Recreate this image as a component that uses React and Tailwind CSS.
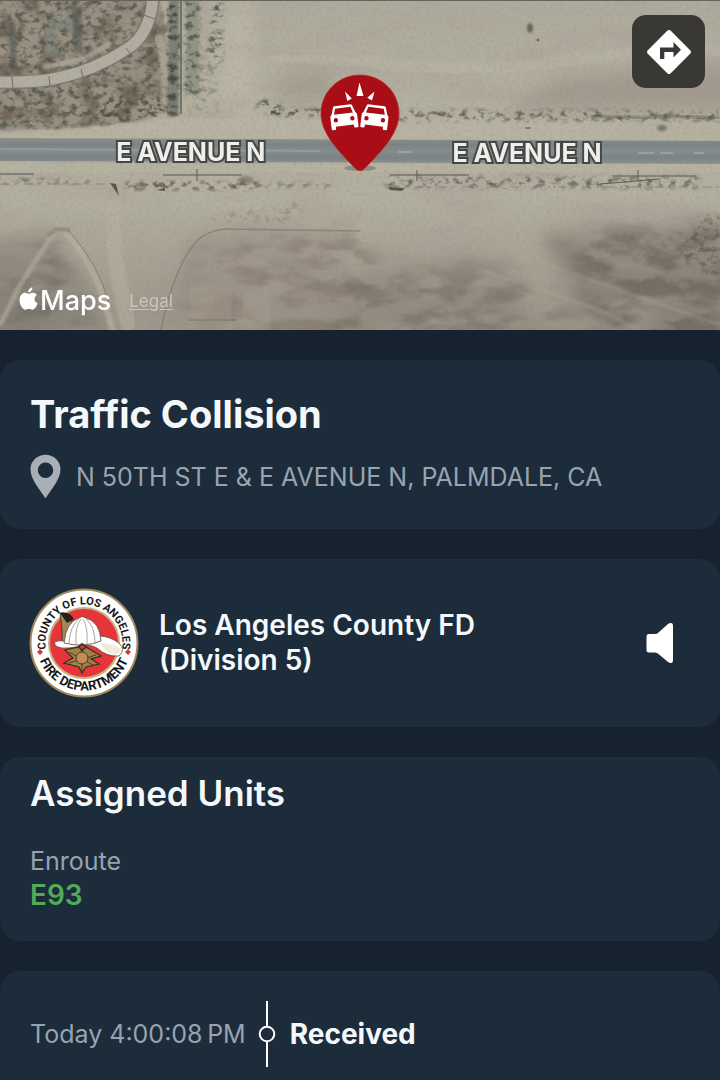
const CAR = (
  <g>
    <path
      fillRule="evenodd"
      d="M4 0.8 Q4.400 0 5.400 0 H21.600 Q22.600 0 23 0.800 L25.400 8 Q27 9.200 27 11 V22.500 Q27 23.500 26 23.500 H23.600 Q22.600 23.500 22.600 22.500 V20.500 H4.400 V22.500 Q4.400 23.500 3.400 23.500 H1 Q0 23.500 0 22.500 V11 Q0 9.200 1.600 8 Z M5.800 2.400 L4 8.400 H23 L21.200 2.400 Z"
      fill="#fff"
    />
    <circle cx="5.200" cy="14" r="2.200" fill="#a90d15" />
    <circle cx="21.800" cy="14" r="2.200" fill="#a90d15" />
  </g>
);

function SatelliteTerrain() {
  return (
    <svg
      className="absolute inset-0 h-full w-full"
      viewBox="0 0 720 330"
      preserveAspectRatio="xMidYMid slice"
      aria-hidden="true"
    >
      <defs>
        <linearGradient id="soil" x1="0" y1="0" x2="0" y2="1">
          <stop offset="0" stopColor="#aeab9d" />
          <stop offset="0.350" stopColor="#b4b1a0" />
          <stop offset="0.600" stopColor="#b3b0a0" />
          <stop offset="0.800" stopColor="#a7a294" />
          <stop offset="1" stopColor="#9a9488" />
        </linearGradient>
        <linearGradient id="asphalt" x1="0" y1="0" x2="0" y2="1">
          <stop offset="0" stopColor="#8d918c" />
          <stop offset="0.250" stopColor="#7b8385" />
          <stop offset="0.500" stopColor="#868d8d" />
          <stop offset="0.750" stopColor="#7a8386" />
          <stop offset="1" stopColor="#8d918a" />
        </linearGradient>
        <filter id="soft" x="-20%" y="-20%" width="140%" height="140%">
          <feGaussianBlur stdDeviation="9" />
        </filter>
        <filter id="edge" x="-20%" y="-20%" width="140%" height="140%">
          <feGaussianBlur stdDeviation="1" />
        </filter>
        <filter id="patches" x="0" y="0" width="100%" height="100%">
          <feTurbulence type="fractalNoise" baseFrequency="0.012 0.035" numOctaves="6" seed="8" />
          <feColorMatrix values="0 0 0 0 0.400  0 0 0 0 0.340  0 0 0 0 0.310  3.200 0 0 0 -1.450" />
        </filter>
        <filter id="grain" x="0" y="0" width="100%" height="100%">
          <feTurbulence type="fractalNoise" baseFrequency="0.300" numOctaves="3" seed="3" />
          <feColorMatrix values="0 0 0 0 0.250  0 0 0 0 0.230  0 0 0 0 0.200  1.600 0 0 0 -0.720" />
        </filter>
        <filter id="scrub" x="-5%" y="-20%" width="110%" height="140%">
          <feTurbulence type="fractalNoise" baseFrequency="0.130 0.170" numOctaves="5" seed="21" result="n" />
          <feColorMatrix in="n" values="0 0 0 0 0  0 0 0 0 0  0 0 0 0 0  4 0 0 0 -1.900" result="mask" />
          <feGaussianBlur in="SourceGraphic" stdDeviation="2" result="shape" />
          <feComposite in="shape" in2="mask" operator="in" />
        </filter>
        <filter id="mottle" x="-5%" y="-5%" width="110%" height="110%">
          <feTurbulence type="fractalNoise" baseFrequency="0.050" numOctaves="6" seed="5" result="n" />
          <feColorMatrix in="n" values="0 0 0 0 0  0 0 0 0 0  0 0 0 0 0  0 4 0 0 -1.800" result="mask" />
          <feGaussianBlur in="SourceGraphic" stdDeviation="2" result="shape" />
          <feComposite in="shape" in2="mask" operator="in" />
        </filter>
        <filter id="dry" x="-15%" y="-25%" width="130%" height="150%">
          <feTurbulence type="fractalNoise" baseFrequency="0.025 0.050" numOctaves="6" seed="14" result="n" />
          <feColorMatrix in="n" values="0 0 0 0 0  0 0 0 0 0  0 0 0 0 0  0 4 0 0 -1.700" result="mask" />
          <feGaussianBlur in="SourceGraphic" stdDeviation="12" result="shape" />
          <feComposite in="shape" in2="mask" operator="in" />
        </filter>
      </defs>

      <rect width="720" height="330" fill="url(#soil)" />

      <g filter="url(#soft)">
        <path d="M-20 245 L50 232 L120 340 H-20Z" fill="#7f7a70" opacity="0.600" />
        <path d="M190 240 Q250 220 340 240 L370 350 H165Z" fill="#978d83" opacity="0.600" />
        <path d="M540 235 L740 220 V350 H610Z" fill="#7b736b" opacity="0.600" />
        <path d="M360 270 L480 255 L560 350 H320Z" fill="#8a8178" opacity="0.550" />
        <path d="M560 78 L740 62 V110 L500 112Z" fill="#968c82" opacity="0.600" />
        <path d="M280 80 L330 70 V100 H275Z" fill="#918c7e" opacity="0.500" />
        <path d="M225 0 H255 V115 H215Z" fill="#bdb9a8" opacity="0.700" />
      </g>

      <rect width="720" height="330" filter="url(#patches)" opacity="0.420" />

      <path d="M-10 -10 H158 Q170 40 168 112 Q110 132 -10 129Z" fill="#948b7d" filter="url(#edge)" opacity="0.850" />
      <path d="M-10 -10 H170 L174 112 Q110 132 -10 129Z" fill="#75695c" filter="url(#mottle)" />
      <path d="M45 15 L75 8 L74 50 L45 55Z" fill="#88918a" filter="url(#mottle)" opacity="0.800" />
      <path d="M-10 -10 H150 L174 112 Q110 132 -10 129Z" fill="#4f5248" filter="url(#scrub)" opacity="0.800" />
      <path d="M72 5 L82 8 L83 55 L74 52Z M9 22 L15 22 L17 70 L10 65Z" fill="#4b5451" filter="url(#edge)" opacity="0.500" />
      <path d="M100 100 L165 100 L172 114 L100 122Z" fill="#4f5145" filter="url(#scrub)" />
      <path d="M10 88 L80 88 L100 97 L10 97Z" fill="#575c50" filter="url(#scrub)" />
      <path d="M153 -5 Q151 36 125 50 Q95 70 58 78 Q35 83 -5 82" fill="none" stroke="#777367" strokeWidth="14" opacity="0.700" />
      <path d="M153 -5 Q151 36 125 50 Q95 70 58 78 Q35 83 -5 82" fill="none" stroke="#b1aea1" strokeWidth="11" />
      <path d="M141 14 L155 19 M126 48 L133 57 M81 69 L84 82 M49 76 L50 87 M12 77 L13 88" stroke="#716c61" strokeWidth="1" />
      <path d="M110 43 Q92 57 70 62 T42 66" fill="none" stroke="#b0ab9b" strokeWidth="5" opacity="0.700" filter="url(#edge)" />
      <path d="M157 35 Q169 65 164 104" fill="none" stroke="#b3ae9d" strokeWidth="8" opacity="0.600" filter="url(#edge)" />
      <path d="M169 0 H179 V116 H167Z" fill="#646860" opacity="0.650" filter="url(#edge)" />
      <path d="M167 0 H180 V115 H167Z" fill="#454a43" filter="url(#scrub)" />
      <path d="M181 0 V114" stroke="#5f6157" strokeWidth="1.500" />
      <path d="M187 0 H199 V95 H185Z" fill="#747d6c" opacity="0.500" filter="url(#edge)" />
      <path d="M185 0 H200 V95 H184Z M212 0 H223 V62 H207Z" fill="#515b4d" filter="url(#scrub)" />
      <path d="M206 40 H218 V115 H188Z" fill="#77725f" filter="url(#scrub)" opacity="0.500" />

      <path d="M0 134 Q110 126 178 118 L720 120 V140 H0Z" fill="#bbb5a3" opacity="0.600" filter="url(#edge)" />
      <path d="M282 111 H330" stroke="#5b5d52" strokeWidth="5" opacity="0.600" filter="url(#edge)" />
      <path d="M250 112 L262 100 L275 101 L285 109 H330 V116 H268 L262 104Z" fill="#45473d" filter="url(#scrub)" />
      <path d="M395 110 L600 110 L720 112 V121 H395Z" fill="#66665a" filter="url(#scrub)" />
      <path d="M590 116 L640 118 L680 116 L720 118" fill="none" stroke="#4c524d" strokeWidth="3" opacity="0.500" filter="url(#edge)" />
      <ellipse cx="530" cy="28" rx="3" ry="5" fill="#67655a" filter="url(#edge)" />
      <circle cx="538" cy="40" r="1.500" fill="#6e6a5e" />
      <ellipse cx="662" cy="128" rx="5" ry="3" fill="#777467" filter="url(#edge)" />
      <ellipse cx="528" cy="128" rx="3" ry="1" fill="#777467" />
      <path d="M360 60 Q450 76 560 62 T720 50" fill="none" stroke="#bfbaa9" strokeWidth="12" opacity="0.350" filter="url(#edge)" />
      <path d="M270 58 Q300 55 360 64" fill="none" stroke="#bfbaa9" strokeWidth="10" opacity="0.350" filter="url(#edge)" />

      <path d="M0 138 L720 141 V164 L0 161Z" fill="url(#asphalt)" />
      <path d="M0 149 L320 151" stroke="#949b98" strokeWidth="2" />
      <path d="M398 152 H412 M638 153 H654 M660 153 H673 M694 153 H704" stroke="#b7b8ae" strokeWidth="1" />

      <path d="M0 164 H720 V172 H0Z" fill="#bbb5a3" opacity="0.500" />
      <path d="M0 178 H90 V183 H0Z M230 183 H330 V187 H230Z M385 176 L700 177 V188 H385Z" fill="#66645a" filter="url(#scrub)" opacity="0.900" />
      <path d="M125 181 H258 V190 H125Z" fill="#6c6056" filter="url(#scrub)" />
      <path d="M0 174 H34 M163 175 H242 M197 169 V181 M390 175 H469 M417 170 V181 M600 184 L660 179 M612 176 H696 M638 170 V181" stroke="#5b594e" strokeWidth="1" />
      <path d="M0 184 H110 M230 185 H330 M390 187 H720" stroke="#7f7a6d" strokeWidth="1" strokeDasharray="9 5 3 7" opacity="0.700" />
      <path d="M110 183 L119 196 L116 184Z M156 190 L165 188 V191Z M388 187 L405 188 L402 191 L390 190Z" fill="#55534a" />
      <ellipse cx="246" cy="180" rx="8" ry="4" fill="#716c60" filter="url(#edge)" opacity="0.600" />
      <ellipse cx="140" cy="185" rx="6" ry="2" fill="#776658" filter="url(#edge)" opacity="0.700" />

      <path d="M0 260 L55 240 L95 330 H0Z" fill="#66625a" filter="url(#dry)" opacity="0.500" />
      <path d="M200 245 L370 225 V340 H180Z" fill="#7d7065" filter="url(#dry)" opacity="0.500" />
      <path d="M350 265 L520 270 L600 340 H330Z" fill="#6d655c" filter="url(#dry)" opacity="0.500" />
      <path d="M560 235 L740 225 V345 H610Z" fill="#665d56" filter="url(#dry)" opacity="0.600" />
      <path d="M112 200 Q109 245 130 330" fill="none" stroke="#b8b2a2" strokeWidth="16" opacity="0.500" filter="url(#edge)" />
      <path d="M57 228 L20 285 L0 325" fill="none" stroke="#b7b1a2" strokeWidth="5" opacity="0.600" filter="url(#edge)" />
      <path d="M64 230 Q94 263 105 303 T114 330" fill="none" stroke="#b8b1a0" strokeWidth="6" opacity="0.700" filter="url(#edge)" />
      <path d="M68 230 Q98 263 109 303" fill="none" stroke="#766f62" strokeWidth="1" opacity="0.700" />
      <path d="M48 236 L56 229 L70 230" fill="none" stroke="#7b6d5c" strokeWidth="4" opacity="0.500" filter="url(#edge)" />
      <path d="M161 330 Q174 266 197 241 Q206 231 225 229 L360 231" fill="none" stroke="#777065" strokeWidth="1.500" opacity="0.550" />
      <path d="M189 320 H235" stroke="#5d594f" strokeWidth="1" />
      <path d="M190 288 H232 V330 H190Z M245 290 H270 V330 H240Z" fill="#a89f91" opacity="0.400" filter="url(#edge)" />
      <path d="M215 215 L300 202 V222 H210Z M600 232 H720 V262 H640Z" fill="#6d6459" filter="url(#scrub)" opacity="0.350" />
      <path d="M700 215 H720 V280 L680 260Z" fill="#57534a" filter="url(#scrub)" opacity="0.600" />
      <path d="M480 270 L600 310 L640 330 M520 255 L720 325" fill="none" stroke="#aea797" strokeWidth="3" opacity="0.300" filter="url(#edge)" />

      <rect width="720" height="330" filter="url(#grain)" opacity="0.300" />
      <path d="M0 0.500 H720" stroke="#66645a" strokeWidth="1" />
    </svg>
  );
}

function CollisionPin() {
  return (
    <svg viewBox="0 0 80 100" className="h-[100px] w-[80px]" role="img" aria-label="Traffic collision location">
      <ellipse cx="40" cy="94" rx="16" ry="3" fill="#66665f" opacity="0.500" />
      <path
        d="M40 1 C61.500 1 79 18 79 39.500 C79 58 64 75 45 94 Q40 99.500 35 94 C16 75 1 58 1 39.500 C1 18 18.500 1 40 1Z"
        fill="#a90d15"
        stroke="#b92d2c"
        strokeWidth="0.800"
      />
      <path d="M39.500 8.500 L43.500 22 H36.500Z M25 17.500 L31.800 24.500 L27.400 27Z M54.500 17.500 L52 26.500 L47.200 23.800Z" fill="#fff" />
      <g transform="translate(9 33) rotate(-7)">{CAR}</g>
      <g transform="translate(43 29.700) rotate(7)">{CAR}</g>
    </svg>
  );
}

function DepartmentSeal() {
  return (
    <svg
      viewBox="0 0 110 110"
      className="h-[110px] w-[110px] shrink-0"
      role="img"
      aria-label="County of Los Angeles Fire Department seal"
    >
      <defs>
        <path id="arc-top" d="M21.660 74.250 A38.500 38.500 0 1 1 88.340 74.250" />
        <path id="arc-bottom" d="M7.500 55 A47.500 47.500 0 0 0 102.500 55" />
      </defs>
      <circle cx="55" cy="55" r="53.500" fill="#fff" stroke="#a0875c" strokeWidth="2" />
      <circle cx="55" cy="55" r="35" fill="#e5343a" stroke="#c5b183" strokeWidth="2" />
      <g fill="#171717" fontFamily="Roboto, sans-serif" fontWeight="700" textAnchor="middle">
        <text fontSize="11">
          <textPath href="#arc-top" startOffset="50%">COUNTY OF LOS ANGELES</textPath>
        </text>
        <text fontSize="13">
          <textPath href="#arc-bottom" startOffset="50%">FIRE DEPARTMENT</textPath>
        </text>
      </g>
      <path d="M11 61 L14 64 L11 67 L8 64Z M99 61 L102 64 L99 67 L96 64Z" fill="#d8353b" />
      <path d="M31 25 Q38 24 43 32 L38 51 L33 57 Q34 40 31 25Z" fill="#a38853" stroke="#3b3122" strokeWidth="0.800" />
      <path d="M31 25 Q40 23 45 31 L38 35Z" fill="#251f1b" />
      <path
        d="M26 57 Q24 52 34 53 L70 48 Q80 48 90 55 Q97 62 90 68 Q78 69 68 60 Q60 55 47 59 Q30 62 26 57Z"
        fill="#fff"
        stroke="#4c4539"
        strokeWidth="0.700"
      />
      <path d="M71 55 Q85 55 92 61 Q92 68 82 66 Q74 62 71 55Z" fill="#f3ebdd" />
      <path d="M35 55 Q37 34 50 30 Q53 27 57 30 Q71 34 72 53 Q55 60 35 55Z" fill="#fff" stroke="#4c4539" strokeWidth="0.800" />
      <path d="M47 56 Q46 38 52 31 M58 56 Q59 38 54 31 M66 55 Q66 38 57 31 M40 55 Q41 38 50 31" fill="none" stroke="#8c8578" strokeWidth="0.700" />
      <path
        d="M36 62 L50 59 L53 63 L57 59 L72 68 L62 71 L70 76 L57 79 L53 85 L50 79 L35 75 L44 70Z"
        fill="#a08249"
        stroke="#392d1c"
        strokeWidth="1.200"
      />
      <path d="M40 64 L64 77 M67 67 L40 75 M53 60 V84" stroke="#392d1c" strokeWidth="0.800" />
      <circle cx="53" cy="70" r="6" fill="#c58b54" stroke="#493920" strokeWidth="1" />
      <path d="M48 60 L53 56 L59 60" fill="none" stroke="#493920" strokeWidth="2" />
    </svg>
  );
}

function RoadLabel({ className }) {
  return (
    <span
      className={`absolute -translate-x-1/2 text-[25px] leading-7 font-bold whitespace-nowrap text-[#eeeeeb] [paint-order:stroke_fill] [-webkit-text-stroke:4px_#454744] ${className}`}
    >
      E AVENUE N
    </span>
  );
}

export default function App() {
  return (
    <div className="min-h-screen bg-[#16222e] font-['Inter','Liberation_Sans',sans-serif] text-[#f5f8fb]">
      <header className="relative h-[330px] overflow-hidden">
        <SatelliteTerrain />
        <RoadLabel className="top-[138px] left-[26.5%]" />
        <RoadLabel className="top-[139px] left-[73.2%]" />
        <div className="absolute top-[74px] left-1/2 -translate-x-1/2">
          <CollisionPin />
        </div>
        <button
          type="button"
          aria-label="Directions"
          className="absolute top-[15px] right-[15px] flex h-[73px] w-[73px] items-center justify-center rounded-[14px] bg-[#3a3834]"
        >
          <svg viewBox="0 0 46 46" className="h-[46px] w-[46px]" aria-hidden="true">
            <path d="M21.500 1.600 Q23 0.200 24.500 1.600 L44.400 21.500 Q45.800 23 44.400 24.500 L24.500 44.400 Q23 45.800 21.500 44.400 L1.600 24.500 Q0.200 23 1.600 21.500Z" fill="#fff" />
            <path d="M14 30 V18.500 H27.500 V13 L35 20.800 L27.500 28.500 V23 H18.300 V30Z" fill="#3a3834" />
          </svg>
        </button>
        <div className="absolute bottom-[11px] left-[19px] flex items-center">
          <svg viewBox="0 0 18 23" className="mb-1 h-[24px] w-[19px]" aria-hidden="true">
            <path
              d="M12.700 0.300 C12.900 2.800 11 5.200 8.800 5.300 C8.500 2.900 10.500 0.700 12.700 0.300Z M9.200 6.700 C10.100 6.700 11.300 5.500 13.200 5.500 C15 5.500 16.400 6.400 17.100 7.600 C13.800 9.500 14.200 14.200 17.700 15.500 C17 17.900 15 21.700 12.900 21.700 C11.600 21.700 11 20.900 9.400 20.900 C7.700 20.900 7.100 21.700 5.900 21.700 C3.500 21.700 0.400 17 0.400 12.400 C0.400 8 3.200 5.500 5.900 5.500 C7.500 5.500 8.500 6.700 9.200 6.700Z"
              fill="#fff"
            />
          </svg>
          <span className="ml-0.5 text-[27px] leading-9 font-medium text-white">Maps</span>
          <a href="#legal" className="ml-[18px] text-[17px] leading-6 text-[#c9c6ba] underline underline-offset-2">
            Legal
          </a>
        </div>
      </header>

      <main className="flex flex-col gap-[30px] pt-[30px]">
        <section className="rounded-[20px] bg-[#1c2c3b] px-[30px] pt-[30px] pb-[29px]">
          <h1 className="text-[38px] leading-12 font-bold">Traffic Collision</h1>
          <p className="mt-[15px] flex items-center gap-[15px] text-[25px] leading-8 text-[#98a3b1]">
            <svg viewBox="0 0 32 47" className="h-[47px] w-[31px] shrink-0" aria-hidden="true">
              <path
                fillRule="evenodd"
                d="M16 1 C7.400 1 0.500 7.700 0.500 16 C0.500 26 10 37 16 46 C22 37 31.500 26 31.500 16 C31.500 7.700 24.600 1 16 1Z M16 9 A8 8 0 1 1 16 25 A8 8 0 1 1 16 9Z"
                fill="#a9afb7"
              />
            </svg>
            <span>N 50TH ST E &amp; E AVENUE N, PALMDALE, CA</span>
          </p>
        </section>

        <section className="flex items-center gap-5 rounded-[20px] bg-[#1c2c3b] py-[29px] pr-[46px] pl-[29px]">
          <DepartmentSeal />
          <h2 className="flex-1 text-[28px] leading-[35px] font-semibold">
            Los Angeles County FD
            <br />
            (Division 5)
          </h2>
          <button type="button" aria-label="Listen to dispatch audio">
            <svg viewBox="0 0 28 42" className="h-[42px] w-[28px]" aria-hidden="true">
              <path d="M3 12 H9 Q11 12 12.500 10.500 L22 2 Q24 0.500 26 1.200 Q27 2 27 4 V38 Q27 40 26 40.800 Q24 41.500 22 40 L12.500 32 Q11 30.500 9 30.500 H3 Q0.500 30.500 0.500 28 V14.500 Q0.500 12 3 12Z" fill="#fff" />
            </svg>
          </button>
        </section>

        <section className="rounded-[20px] bg-[#1c2c3b] px-[30px] pt-4 pb-7">
          <h2 className="text-[35px] leading-10 font-semibold">Assigned Units</h2>
          <h3 className="mt-8 text-[25px] leading-8 text-[#98a3b1]">Enroute</h3>
          <p className="text-[28px] leading-9 font-semibold text-[#52ab57]">E93</p>
        </section>

        <section className="rounded-t-[20px] bg-[#1c2c3b] px-[30px] pt-[30px]">
          <ol>
            <li className="flex h-[79px] items-start">
              <time className="text-[25px] leading-[66px] whitespace-nowrap text-[#98a3b1]">Today 4:00:08{"\u202f"}PM</time>
              <svg viewBox="0 0 18 66" className="mr-[14px] ml-3 h-[66px] w-[18px] shrink-0" aria-hidden="true">
                <path d="M9 0 V25 M9 41 V66" stroke="#fff" strokeWidth="2" />
                <circle cx="9" cy="33" r="7.300" fill="none" stroke="#fff" strokeWidth="2" />
              </svg>
              <strong className="text-[28px] leading-[66px] font-bold">Received</strong>
            </li>
          </ol>
        </section>
      </main>
    </div>
  );
}
